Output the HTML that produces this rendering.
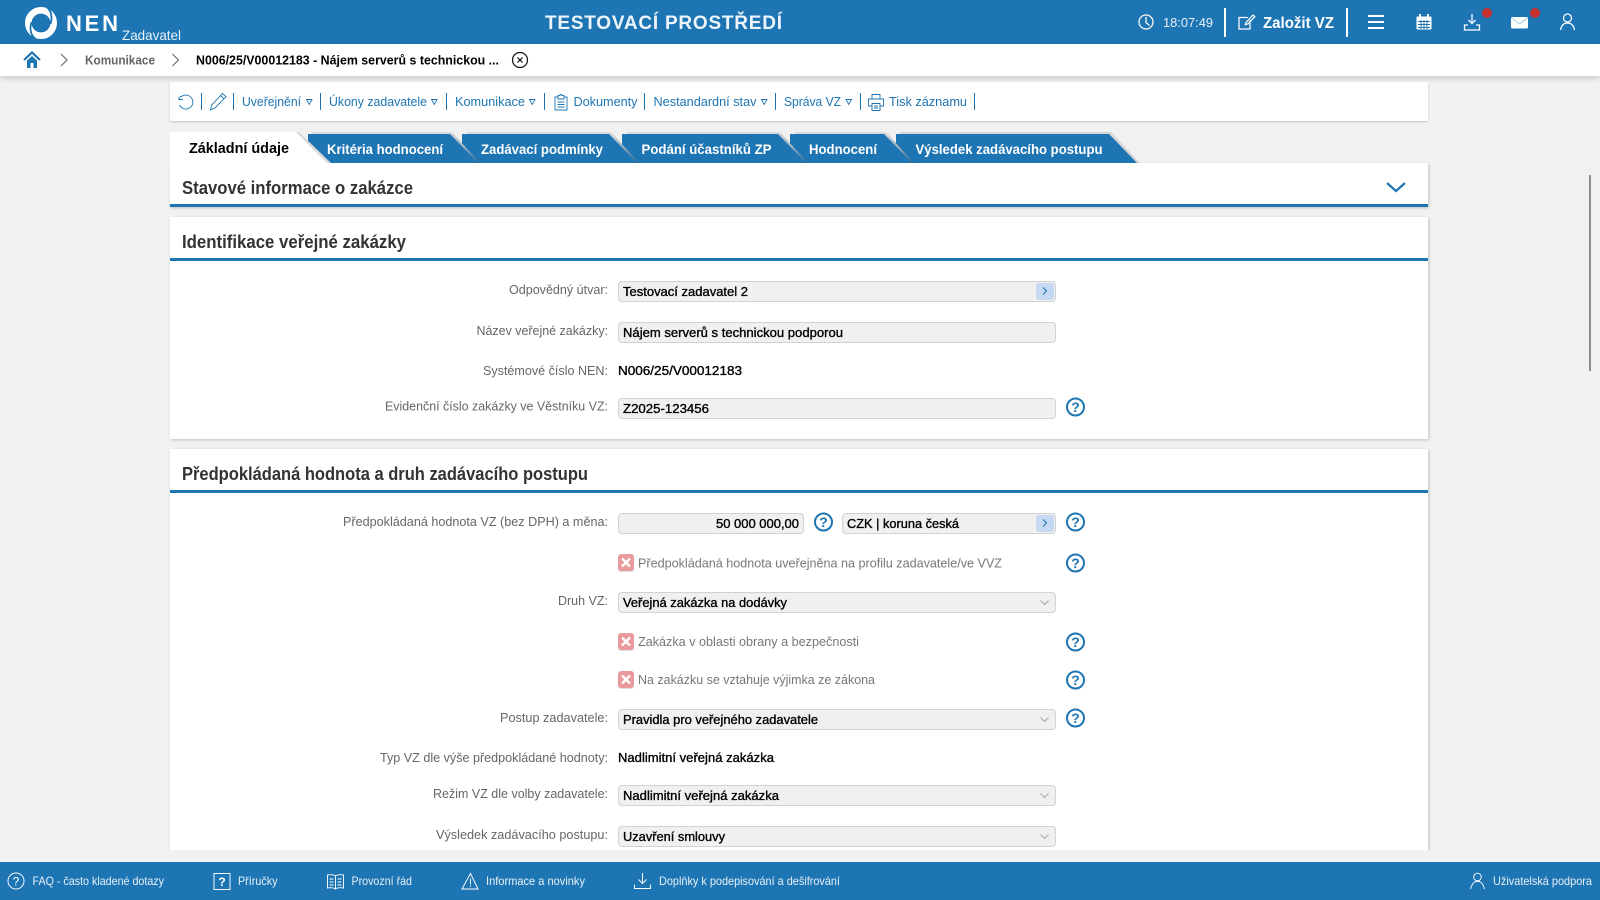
<!DOCTYPE html>
<html lang="cs">
<head>
<meta charset="utf-8">
<title>NEN – Testovací prostředí</title>
<style>
html,body{margin:0;padding:0;width:1600px;height:900px;overflow:hidden;background:#f1f1f1;font-family:"Liberation Sans",sans-serif}
.a{position:absolute}
.top{left:0;top:0;width:1600px;height:44px;background:#1d75b4}
.bc{left:0;top:44px;width:1600px;height:32px;background:#fff;box-shadow:0 2px 6px rgba(0,0,0,.18)}
.tb{left:170px;top:82px;width:1258px;height:39px;background:#fff;box-shadow:0 1px 2px rgba(0,0,0,.2)}
.clip{left:160px;top:125px;width:1290px;height:725px;overflow:hidden}
.p{position:absolute;left:10px;width:1258px;background:#fff;box-shadow:1px 1px 3px rgba(0,0,0,.2)}
.p i{position:absolute;left:0;width:100%;height:3px;background:#1d75b4}
.in{position:absolute;box-sizing:border-box;background:#f0f0f0;border:1px solid #d2d2d2;border-radius:4px;height:21px}
.btn{position:absolute;left:1036px;width:18px;height:17px;background:#c5daf2;border-radius:3px}
.ft{left:0;top:862px;width:1600px;height:38px;background:#1d75b4}
.sb{left:1589px;top:175px;width:2px;height:196px;background:#8e8e8e}
svg{position:absolute;left:0;top:0}
text{font-family:"Liberation Sans",sans-serif}
.l{font-size:13px;fill:#666}
.v{font-size:13px;fill:#000;stroke:#000;stroke-width:.35px}
.g{font-size:13px;fill:#777}
.t{font-size:13px;fill:#1d75b4}
.h{font-size:18px;font-weight:bold;fill:#333}
.tab{font-size:14px;font-weight:bold;fill:#fff}
.f{font-size:12px;fill:#e8f1f7}
.q{font-size:14px;font-weight:bold;fill:#1d75b4;text-anchor:middle}
.ic{fill:none;stroke:#1d75b4;stroke-width:1.1}
.thin{fill:none;stroke:#1d75b4;stroke-width:.9}
.w{fill:none;stroke:#fff;stroke-width:1.25}
.w1{fill:none;stroke:#fff;stroke-width:.95}
</style>
</head>
<body>
<div class="a top"></div>
<div class="a bc"></div>
<div class="a tb"></div>
<div class="a clip">
  <div class="p" style="top:38px;height:44px"><i style="top:41px"></i></div>
  <div class="p" style="top:92px;height:222px"><i style="top:41px"></i></div>
  <div class="p" style="top:324px;height:401px"><i style="top:41px"></i></div>
</div>
<div class="in" style="left:618px;top:281px;width:438px"></div>
<div class="btn" style="top:283px"></div>
<div class="in" style="left:618px;top:322px;width:438px"></div>
<div class="in" style="left:618px;top:398px;width:438px"></div>
<div class="in" style="left:618px;top:513px;width:186px"></div>
<div class="in" style="left:842px;top:513px;width:214px"></div>
<div class="btn" style="top:515px"></div>
<div class="in" style="left:618px;top:592px;width:438px"></div>
<div class="in" style="left:618px;top:709px;width:438px"></div>
<div class="in" style="left:618px;top:785px;width:438px"></div>
<div class="in" style="left:618px;top:826px;width:438px"></div>
<div class="a ft"></div>
<div class="a sb"></div>

<svg width="1600" height="900" viewBox="0 0 1600 900">
<defs>
<linearGradient id="sh" gradientUnits="userSpaceOnUse" x1="0" y1="132" x2="0" y2="163"><stop offset="0" stop-color="#dcdcdc"/><stop offset=".45" stop-color="#9fb3c2"/><stop offset="1" stop-color="#2f6a94"/></linearGradient>
</defs>
<!-- logo -->
<circle cx="41" cy="23" r="12.700" fill="none" stroke="#fff" stroke-width="6.600"/>
<path d="M44 5.500C51 9 53 16 50.500 24" fill="none" stroke="#1d75b4" stroke-width="1.800"/>
<path d="M38 40.500C31 37 29 30 31.500 22" fill="none" stroke="#1d75b4" stroke-width="1.800"/>
<text x="66" y="31" font-size="22" font-weight="bold" fill="#fff" textLength="52">NEN</text>
<text x="122" y="40" font-size="14" fill="#e8f1f8" textLength="59" lengthAdjust="spacingAndGlyphs">Zadavatel</text>
<text x="545" y="29" font-size="19" font-weight="bold" fill="#eef5fa" textLength="237">TESTOVACÍ PROSTŘEDÍ</text>

<!-- header right -->
<circle cx="1146" cy="22" r="7" class="w"/><path d="M1146 17v5.500l3.500 3" class="w"/>
<text x="1163" y="27" font-size="13" fill="#e8f1f7" textLength="50" lengthAdjust="spacingAndGlyphs">18:07:49</text>
<rect x="1224" y="8" width="2" height="29" fill="#fff"/>
<path d="M1250 20v9h-11V17.500h9" class="w"/><path d="M1246 22.500l7-7.500 1.800 1.800-7 7.200-2.500.7z" class="w"/>
<text x="1263" y="28" font-size="15.500" font-weight="bold" fill="#fff" textLength="71" lengthAdjust="spacingAndGlyphs">Založit VZ</text>
<rect x="1346" y="8" width="2" height="29" fill="#fff"/>
<path d="M1368 16h16M1368 22h16M1368 28h16" fill="none" stroke="#fff" stroke-width="2"/>
<rect x="1416.500" y="16.500" width="15" height="13" rx="1" fill="#fff"/>
<path d="M1420 14v4M1428 14v4" stroke="#fff" stroke-width="2"/>
<path d="M1418 21.500h12M1418 24.500h12M1418 27.500h12M1421 20v9M1424 20v9M1427 20v9" stroke="#1d75b4" stroke-width=".9"/>
<path d="M1472 14v9M1468.500 20l3.500 3.500 3.500-3.500" class="w"/><path d="M1468 25h-3.500v5h15v-5H1476" class="w"/>
<circle cx="1487" cy="13" r="5" fill="#c62f2f"/>
<rect x="1511" y="17" width="17" height="11.500" rx="1.500" fill="#fff"/>
<path d="M1511.500 18l8 6 8-6" fill="none" stroke="#a9cbe3" stroke-width="1"/>
<circle cx="1535" cy="13" r="5" fill="#c62f2f"/>
<circle cx="1567.500" cy="18" r="4" class="w"/><path d="M1560.500 30c1-5 3.500-7 7-7s6 2 7 7" class="w"/>

<!-- breadcrumb -->
<path d="M24 60L32 52.500 40 60" fill="none" stroke="#1d75b4" stroke-width="2.200"/>
<path d="M27 60.500L32 56l5 4.500V68h-3.500v-5h-3v5H27z" fill="#1d75b4"/>
<path d="M61 54l6 6-6 6M172.500 54l6 6-6 6" fill="none" stroke="#666" stroke-width="1.100"/>
<text x="85" y="64.500" font-size="13" font-weight="bold" fill="#666" textLength="70" lengthAdjust="spacingAndGlyphs">Komunikace</text>
<text x="196" y="64.500" font-size="13" font-weight="bold" fill="#000" textLength="303" lengthAdjust="spacingAndGlyphs">N006/25/V00012183 - Nájem serverů s technickou ...</text>
<circle cx="520" cy="60" r="7.500" fill="none" stroke="#111" stroke-width="1.200"/>
<path d="M517.500 57.500l5 5M522.500 57.500l-5 5" stroke="#111" stroke-width="1.200"/>

<!-- toolbar -->
<path d="M181 97a7 7 0 1 1-1.500 8" class="thin"/><path d="M178.500 99.500h4.500M180.500 96l-2 3.500" class="thin"/>
<rect x="201" y="93" width="1" height="17" fill="#1d75b4"/>
<path d="M210.500 110l1.200-5 10.800-11.500 3.500 3.200-11 11.300zM220.500 95.500l3.500 3.300" class="thin"/>
<rect x="233" y="93" width="1" height="17" fill="#1d75b4"/>
<text x="242" y="106" class="t" textLength="59" lengthAdjust="spacingAndGlyphs">Uveřejnění</text>
<path d="M306.500 99.500h5.500l-2.750 5z" class="thin"/>
<rect x="320" y="93" width="1" height="17" fill="#1d75b4"/>
<text x="329" y="106" class="t" textLength="98" lengthAdjust="spacingAndGlyphs">Úkony zadavatele</text>
<path d="M431.500 99.500h5.500l-2.750 5z" class="thin"/>
<rect x="446" y="93" width="1" height="17" fill="#1d75b4"/>
<text x="455" y="106" class="t" textLength="70" lengthAdjust="spacingAndGlyphs">Komunikace</text>
<path d="M529.500 99.500h5.500l-2.750 5z" class="thin"/>
<rect x="544" y="93" width="1" height="17" fill="#1d75b4"/>
<path d="M558 97h-3v13h12V97h-3M558 95.500h2a1 1 0 0 1 2 0h2V99h-6zM557.500 102h7M557.500 104.500h7M557.500 107h7" class="thin"/>
<text x="573.500" y="106" class="t" textLength="64" lengthAdjust="spacingAndGlyphs">Dokumenty</text>
<rect x="644" y="93" width="1" height="17" fill="#1d75b4"/>
<text x="653.500" y="106" class="t" textLength="103" lengthAdjust="spacingAndGlyphs">Nestandardní stav</text>
<path d="M761.500 99.500h5.500l-2.750 5z" class="thin"/>
<rect x="775" y="93" width="1" height="17" fill="#1d75b4"/>
<text x="784" y="106" class="t" textLength="57" lengthAdjust="spacingAndGlyphs">Správa VZ</text>
<path d="M846 99.500h5.500l-2.750 5z" class="thin"/>
<rect x="860" y="93" width="1" height="17" fill="#1d75b4"/>
<path d="M872 99v-4.500h8V99M872 106h-3.500v-7h15v7H880M872 103.500h8v7h-8zM874 106h4M874 108h4" class="thin"/>
<text x="889" y="106" class="t" textLength="78" lengthAdjust="spacingAndGlyphs">Tisk záznamu</text>
<rect x="974" y="93" width="1" height="17" fill="#1d75b4"/>

<!-- tabs -->
<g>
<path d="M900 132H1111L1140 163H900z" fill="#d6d6d6"/><path d="M896 134H1109L1137 163H896z" fill="#1d75b4"/>
<path d="M795 132H886L914 163H795z" fill="url(#sh)"/><path d="M790 134H884L912 163H790z" fill="#1d75b4"/>
<path d="M627 132H780L808 163H627z" fill="url(#sh)"/><path d="M622 134H778L806 163H622z" fill="#1d75b4"/>
<path d="M467 132H611L639 163H467z" fill="url(#sh)"/><path d="M462 134H609L637 163H462z" fill="#1d75b4"/>
<path d="M312 132H452L480 163H312z" fill="url(#sh)"/><path d="M308 134H450L478 163H308z" fill="#1d75b4"/>
<path d="M170 132H299L331 163H170z" fill="#d8d8d8"/><path d="M170 132H296L327 163H170z" fill="#fff"/>
</g>
<text x="189" y="153" font-size="14.500" font-weight="bold" fill="#000" textLength="100" lengthAdjust="spacingAndGlyphs">Základní údaje</text>
<text x="327" y="154" class="tab" textLength="116" lengthAdjust="spacingAndGlyphs">Kritéria hodnocení</text>
<text x="481" y="154" class="tab" textLength="122" lengthAdjust="spacingAndGlyphs">Zadávací podmínky</text>
<text x="641.500" y="154" class="tab" textLength="130" lengthAdjust="spacingAndGlyphs">Podání účastníků ZP</text>
<text x="809" y="154" class="tab" textLength="68" lengthAdjust="spacingAndGlyphs">Hodnocení</text>
<text x="915.500" y="154" class="tab" textLength="187" lengthAdjust="spacingAndGlyphs">Výsledek zadávacího postupu</text>

<!-- headings -->
<text x="182" y="194" class="h" textLength="231" lengthAdjust="spacingAndGlyphs">Stavové informace o zakázce</text>
<path d="M1387 183l9 8 9-8" fill="none" stroke="#1d75b4" stroke-width="2.200"/>
<text x="182" y="248" class="h" textLength="224" lengthAdjust="spacingAndGlyphs">Identifikace veřejné zakázky</text>
<text x="182" y="480" class="h" textLength="406" lengthAdjust="spacingAndGlyphs">Předpokládaná hodnota a druh zadávacího postupu</text>

<!-- labels -->
<text x="509" y="294" class="l" textLength="99" lengthAdjust="spacingAndGlyphs">Odpovědný útvar:</text>
<text x="476.500" y="335" class="l" textLength="131.500" lengthAdjust="spacingAndGlyphs">Název veřejné zakázky:</text>
<text x="483" y="375" class="l" textLength="125" lengthAdjust="spacingAndGlyphs">Systémové číslo NEN:</text>
<text x="385" y="410.500" class="l" textLength="223" lengthAdjust="spacingAndGlyphs">Evidenční číslo zakázky ve Věstníku VZ:</text>
<text x="343" y="526" class="l" textLength="265" lengthAdjust="spacingAndGlyphs">Předpokládaná hodnota VZ (bez DPH) a měna:</text>
<text x="558" y="605" class="l" textLength="50" lengthAdjust="spacingAndGlyphs">Druh VZ:</text>
<text x="500" y="722" class="l" textLength="108" lengthAdjust="spacingAndGlyphs">Postup zadavatele:</text>
<text x="380" y="762" class="l" textLength="228" lengthAdjust="spacingAndGlyphs">Typ VZ dle výše předpokládané hodnoty:</text>
<text x="433" y="798" class="l" textLength="175" lengthAdjust="spacingAndGlyphs">Režim VZ dle volby zadavatele:</text>
<text x="436" y="839" class="l" textLength="172" lengthAdjust="spacingAndGlyphs">Výsledek zadávacího postupu:</text>

<!-- values -->
<text x="623" y="296" class="v" textLength="125" lengthAdjust="spacingAndGlyphs">Testovací zadavatel 2</text>
<text x="623" y="337" class="v" textLength="220" lengthAdjust="spacingAndGlyphs">Nájem serverů s technickou podporou</text>
<text x="618" y="375" class="v" textLength="124" lengthAdjust="spacingAndGlyphs">N006/25/V00012183</text>
<text x="623" y="413" class="v" textLength="86" lengthAdjust="spacingAndGlyphs">Z2025-123456</text>
<text x="716" y="528" class="v" textLength="83" lengthAdjust="spacingAndGlyphs">50 000 000,00</text>
<text x="847" y="528" class="v" textLength="112" lengthAdjust="spacingAndGlyphs">CZK | koruna česká</text>
<text x="638" y="567.500" class="g" textLength="364" lengthAdjust="spacingAndGlyphs">Předpokládaná hodnota uveřejněna na profilu zadavatele/ve VVZ</text>
<text x="623" y="607" class="v" textLength="164" lengthAdjust="spacingAndGlyphs">Veřejná zakázka na dodávky</text>
<text x="638" y="646" class="g" textLength="221" lengthAdjust="spacingAndGlyphs">Zakázka v oblasti obrany a bezpečnosti</text>
<text x="638" y="684" class="g" textLength="237" lengthAdjust="spacingAndGlyphs">Na zakázku se vztahuje výjimka ze zákona</text>
<text x="623" y="724" class="v" textLength="195" lengthAdjust="spacingAndGlyphs">Pravidla pro veřejného zadavatele</text>
<text x="618" y="762" class="v" textLength="156" lengthAdjust="spacingAndGlyphs">Nadlimitní veřejná zakázka</text>
<text x="623" y="800" class="v" textLength="156" lengthAdjust="spacingAndGlyphs">Nadlimitní veřejná zakázka</text>
<text x="623" y="841" class="v" textLength="102" lengthAdjust="spacingAndGlyphs">Uzavření smlouvy</text>

<!-- lookup chevrons -->
<path d="M1043 287.500l3.500 3.500-3.500 3.500M1043 519.500l3.500 3.500-3.500 3.500" fill="none" stroke="#1d75b4" stroke-width="1.100"/>
<!-- select chevrons -->
<path d="M1040.500 600.500l4 4 4-4M1040.500 717.500l4 4 4-4M1040.500 793.500l4 4 4-4M1040.500 834.500l4 4 4-4" fill="none" stroke="#aaa" stroke-width="1.100"/>

<!-- checkboxes -->
<g fill="#000" opacity=".12"><rect x="618" y="555" width="16" height="17" rx="3"/><rect x="618" y="634" width="16" height="17" rx="3"/><rect x="618" y="672" width="16" height="17" rx="3"/></g>
<g fill="#e89a9c"><rect x="618" y="554" width="16" height="17" rx="3"/><rect x="618" y="633" width="16" height="17" rx="3"/><rect x="618" y="671" width="16" height="17" rx="3"/></g>
<path d="M622 558.500l8 8M630 558.500l-8 8M622 637.500l8 8M630 637.500l-8 8M622 675.500l8 8M630 675.500l-8 8" stroke="#fff" stroke-width="2.400"/>

<!-- help -->
<g fill="none" stroke="#1d75b4" stroke-width="2">
<circle cx="1075.500" cy="407" r="8.500"/><circle cx="823.500" cy="522" r="8.500"/><circle cx="1075.500" cy="522" r="8.500"/><circle cx="1075.500" cy="563" r="8.500"/><circle cx="1075.500" cy="642" r="8.500"/><circle cx="1075.500" cy="680" r="8.500"/><circle cx="1075.500" cy="718" r="8.500"/>
</g>
<text x="1075.500" y="412" class="q">?</text><text x="823.500" y="527" class="q">?</text><text x="1075.500" y="527" class="q">?</text><text x="1075.500" y="568" class="q">?</text><text x="1075.500" y="647" class="q">?</text><text x="1075.500" y="685" class="q">?</text><text x="1075.500" y="723" class="q">?</text>

<!-- footer -->
<circle cx="16" cy="881" r="8" class="w1"/><text x="16" y="885.500" font-size="12" fill="#fff" text-anchor="middle">?</text>
<text x="32.500" y="885" class="f" textLength="131.500" lengthAdjust="spacingAndGlyphs">FAQ - často kladené dotazy</text>
<rect x="214" y="873.500" width="16" height="16" class="w1"/><text x="222" y="886" font-size="12" font-weight="bold" fill="#fff" text-anchor="middle">?</text>
<text x="238" y="885" class="f" textLength="39.500" lengthAdjust="spacingAndGlyphs">Příručky</text>
<path d="M335.500 876c-2-1.500-5-1.500-8-1v13c3-.5 6-.5 8 1 2-1.500 5-1.500 8-1v-13c-3-.5-6-.5-8 1zM335.500 876v13M329.500 879h4M329.500 882h4M329.500 885h4M337.500 879h4M337.500 882h4M337.500 885h4" class="w1"/>
<text x="351.500" y="885" class="f" textLength="60.500" lengthAdjust="spacingAndGlyphs">Provozní řád</text>
<path d="M470.500 873.500l7.500 15.500h-16zM470.500 878.500v6M470.500 885.500v1.500" class="w1"/>
<text x="486" y="885" class="f" textLength="99" lengthAdjust="spacingAndGlyphs">Informace a novinky</text>
<path d="M642.500 873v10M638.500 879.500l4 4 4-4M634.500 884.500v4h16v-4" class="w1"/>
<text x="659" y="885" class="f" textLength="181" lengthAdjust="spacingAndGlyphs">Doplňky k podepisování a dešifrování</text>
<circle cx="1477.500" cy="877" r="3.800" class="w1"/><path d="M1470.500 889c1-4 3-6.500 5-7.500h4c2 1 4 3.500 5 7.500" class="w1"/>
<text x="1493" y="885" class="f" textLength="99" lengthAdjust="spacingAndGlyphs">Uživatelská podpora</text>
</svg>
</body>
</html>
